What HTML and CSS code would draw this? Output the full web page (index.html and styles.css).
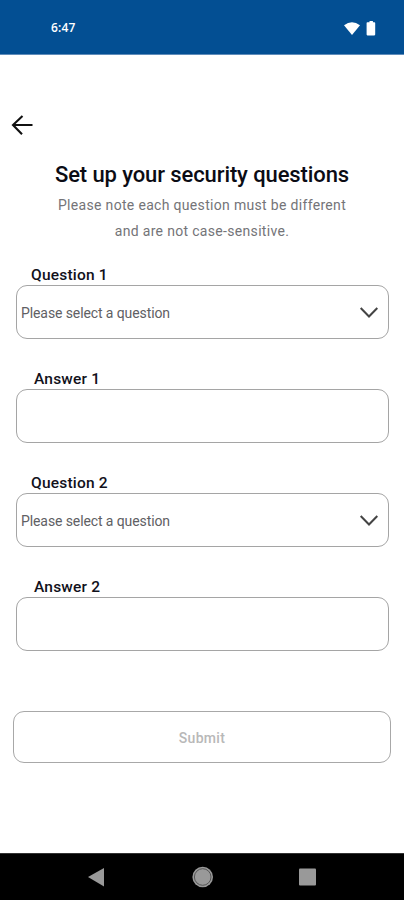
FILE: index.html
```html
<!DOCTYPE html>
<html lang="en">
<head>
<meta charset="utf-8">
<title>Security questions</title>
<link rel="stylesheet" href="styles.css">
</head>
<body>
<header class="status">
  <span class="time">6:47</span>
  <svg class="status-icons" width="34" height="18" viewBox="0 0 34 18"><path d="M0 5.200Q8 -.8 16 5.200L8 15Z" fill="#fff"/><path d="M24 2.200h1.500V1h3.400v1.200h1.500q.8 0 .8.8v11.600q0 .8-.8.800h-7q-.8 0-.8-.8V3q0-.8.8-.8Z" fill="#fff"/></svg>
</header>
<main class="page">
  <button class="back" aria-label="Back"><svg width="24" height="24" viewBox="0 0 24 24"><path d="M22.500 12H2.500M12.500 3L3 12l9 9.200" fill="none" stroke="#111" stroke-width="2.100"/></svg></button>
  <h1 class="title">Set up your security questions</h1>
  <p class="note">Please note each question must be different<br>and are not case-sensitive.</p>
  <form class="form">
    <section class="field">
      <div class="label">Question 1</div>
      <div class="box"><span class="placeholder">Please select a question</span><svg class="chevron" width="20" height="14" viewBox="0 0 20 14"><path d="M1.700 2L10 10.500 18.300 2" fill="none" stroke="#444" stroke-width="2"/></svg></div>
    </section>
    <section class="field">
      <div class="label label-answer">Answer 1</div>
      <div class="box"></div>
    </section>
    <section class="field">
      <div class="label">Question 2</div>
      <div class="box"><span class="placeholder">Please select a question</span><svg class="chevron" width="20" height="14" viewBox="0 0 20 14"><path d="M1.700 2L10 10.500 18.300 2" fill="none" stroke="#444" stroke-width="2"/></svg></div>
    </section>
    <section class="field">
      <div class="label label-answer">Answer 2</div>
      <div class="box"></div>
    </section>
    <button class="submit" type="button">Submit</button>
  </form>
</main>
<nav class="nav">
  <svg width="404" height="46" viewBox="0 0 404 46"><g fill="#999"><path d="M88 23L104 14v18.500Z"/><circle cx="202.700" cy="23" r="10.300"/><rect x="299" y="14.500" width="17" height="17" rx="1"/></g><circle cx="202.700" cy="23" r="8.300" fill="none" stroke="#555" stroke-width="1"/></svg>
</nav>
</body>
</html>
```
FILE: styles.css
```css
* { box-sizing: border-box; }
body {
  margin: 0;
  width: 404px;
  height: 900px;
  display: flex;
  flex-direction: column;
  overflow: hidden;
  background: #fff;
  font-family: Roboto, sans-serif;
}
.status {
  flex: none;
  height: 55px;
  display: flex;
  justify-content: space-between;
  align-items: center;
  padding: 0 26px 0 51px;
  background: #034f93;
  border-bottom: 1px solid #5f8cba;
}
.time {
  margin-top: 2px;
  color: #fff;
  font: 600 12px/14px "Open Sans", sans-serif;
  letter-spacing: 0.2px;
}
.status-icons { display: block; margin-top: 3px; }
.page {
  flex: 1;
  display: flex;
  flex-direction: column;
}
.back {
  display: block;
  width: 24px;
  height: 24px;
  margin: 58px 0 0 10px;
  padding: 0;
  border: 0;
  background: none;
}
.back svg { display: block; }
.title {
  margin: 24px 0 0;
  font-size: 22px;
  line-height: 28px;
  font-weight: 500;
  text-align: center;
  letter-spacing: -0.1px;
  color: #0b0c14;
}
.note {
  margin: 3px 0 0;
  font-size: 14px;
  line-height: 26px;
  font-weight: 400;
  text-align: center;
  letter-spacing: 0.32px;
  color: #747478;
}
.form {
  display: flex;
  flex-direction: column;
  padding: 20px 13px 0;
}
.field {
  height: 104px;
  padding: 0 2px 0 3px;
}
.label {
  height: 21px;
  padding-left: 15px;
  font-size: 15.5px;
  line-height: 22px;
  font-weight: 500;
  letter-spacing: 0.2px;
  color: #11111b;
}
.label-answer { padding-left: 18px; }
.box {
  height: 54px;
  display: flex;
  align-items: center;
  justify-content: space-between;
  padding: 0 9px 0 4px;
  border: 1px solid #a5a5a5;
  border-radius: 11px;
}
.placeholder {
  padding-top: 1px;
  font-size: 14px;
  line-height: 18px;
  letter-spacing: -0.1px;
  color: #606064;
}
.chevron { margin-top: 2px; }
.submit {
  height: 52px;
  margin-top: 31px;
  padding-top: 3px;
  border: 1px solid #a8a8a8;
  border-radius: 11px;
  background: #fff;
  color: #b8b8b8;
  font: 500 14px/18px Roboto, sans-serif;
  letter-spacing: 0.3px;
}
.nav {
  flex: none;
  height: 47px;
  border-top: 1px solid #333;
  background: #000;
}
.nav svg { display: block; }
```
